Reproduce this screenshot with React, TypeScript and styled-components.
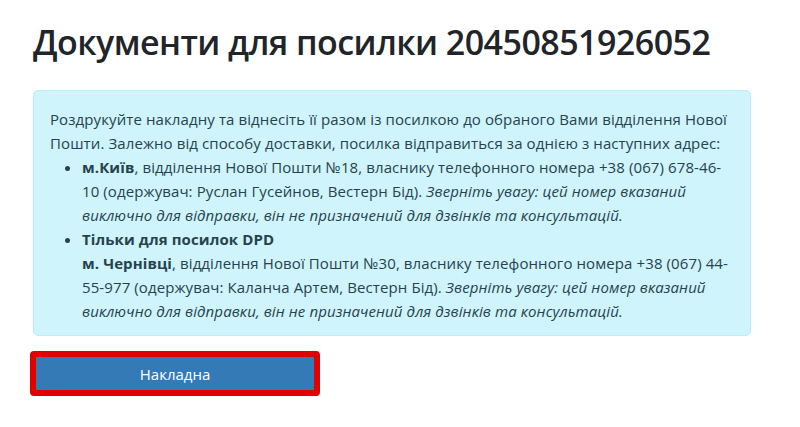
import React from "react";
import styled, { createGlobalStyle } from "styled-components";

const Global = createGlobalStyle`
  html, body { margin: 0; padding: 0; background: #ffffff; }
  body { font-family: "Open Sans", "Noto Sans", sans-serif; color: #212529; }
`;

const Page = styled.main`
  padding: 21px 49px 0 33px;
  display: flex;
  flex-direction: column;
  align-items: flex-start;
`;

const Title = styled.h1`
  margin: 0 0 27px;
  font-size: 34px;
  line-height: 42px;
  font-weight: 600;
  color: #212529;
  letter-spacing: -0.55px;
`;

const Alert = styled.section`
  box-sizing: border-box;
  width: 718px;
  padding: 16px 16px 12px 16px;
  background: #cff4fc;
  border: 1px solid #b6effb;
  border-radius: 5px;
  color: #26434d;
  font-size: 15px;
  line-height: 24px;
  letter-spacing: 0.1px;
`;

const Para = styled.p`
  margin: 0;
`;

const List = styled.ul`
  margin: 0;
  padding-left: 32px;
`;

const Item = styled.li`
  margin: 0;
`;

const Strong = styled.b`
  font-weight: 700;
`;

const Note = styled.i`
  font-style: italic;
`;

const Frame = styled.div`
  margin-top: 15px;
  margin-left: -3px;
  border: 6px solid #e00000;
  border-radius: 4px;
  display: flex;
`;

const Button = styled.button`
  width: 278px;
  height: 33px;
  border: 0;
  border-radius: 0;
  background: #337ab7;
  color: #ffffff;
  font-family: "Open Sans", "Noto Sans", sans-serif;
  font-size: 15px;
  cursor: pointer;
`;

export default function App() {
  return (
    <>
      <Global />
      <Page>
        <Title>Документи для посилки 20450851926052</Title>
        <Alert>
          <Para>
            Роздрукуйте накладну та віднесіть її разом із посилкою до обраного Вами відділення Нової
            Пошти. Залежно від способу доставки, посилка відправиться за однією з наступних адрес:
          </Para>
          <List>
            <Item>
              <Strong>м.Київ</Strong>, відділення Нової Пошти №18, власнику телефонного номера +38 (067) 678-46-10
              (одержувач: Руслан Гусейнов, Вестерн Бід).{" "}
              <Note>Зверніть увагу: цей номер вказаний виключно для відправки, він не призначений для дзвінків та консультацій.</Note>
            </Item>
            <Item>
              <Strong>Тільки для посилок DPD</Strong>
              <br />
              <Strong>м. Чернівці</Strong>, відділення Нової Пошти №30, власнику телефонного номера +38 (067) 44-55-977
              (одержувач: Каланча Артем, Вестерн Бід).{" "}
              <Note>Зверніть увагу: цей номер вказаний виключно для відправки, він не призначений для дзвінків та консультацій.</Note>
            </Item>
          </List>
        </Alert>
        <Frame>
          <Button type="button">Накладна</Button>
        </Frame>
      </Page>
    </>
  );
}
